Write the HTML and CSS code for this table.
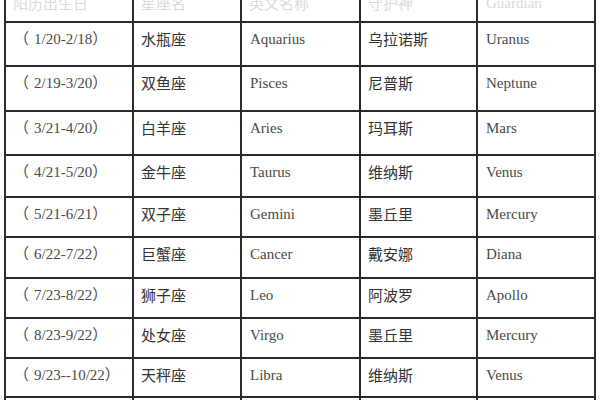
FILE: index.html
```html
<!DOCTYPE html>
<html lang="zh-CN">
<head>
<meta charset="utf-8">
<title>星座表</title>
<link rel="stylesheet" href="styles.css">
</head>
<body>
<div class="page">
  <div class="zodiac">
    <div class="cell head cjk">阳历出生日</div>
    <div class="cell head cjk">星座名</div>
    <div class="cell head cjk">英文名称</div>
    <div class="cell head cjk">守护神</div>
    <div class="cell head">Guardian</div>

    <div class="cell date"><span class="po">（</span>1/20-2/18）</div><div class="cell cjk">水瓶座</div><div class="cell">Aquarius</div><div class="cell cjk">乌拉诺斯</div><div class="cell">Uranus</div>
    <div class="cell date"><span class="po">（</span>2/19-3/20）</div><div class="cell cjk">双鱼座</div><div class="cell">Pisces</div><div class="cell cjk">尼普斯</div><div class="cell">Neptune</div>
    <div class="cell date"><span class="po">（</span>3/21-4/20）</div><div class="cell cjk">白羊座</div><div class="cell">Aries</div><div class="cell cjk">玛耳斯</div><div class="cell">Mars</div>
    <div class="cell date"><span class="po">（</span>4/21-5/20）</div><div class="cell cjk">金牛座</div><div class="cell">Taurus</div><div class="cell cjk">维纳斯</div><div class="cell">Venus</div>
    <div class="cell date"><span class="po">（</span>5/21-6/21）</div><div class="cell cjk">双子座</div><div class="cell">Gemini</div><div class="cell cjk">墨丘里</div><div class="cell">Mercury</div>
    <div class="cell date"><span class="po">（</span>6/22-7/22）</div><div class="cell cjk">巨蟹座</div><div class="cell">Cancer</div><div class="cell cjk">戴安娜</div><div class="cell">Diana</div>
    <div class="cell date"><span class="po">（</span>7/23-8/22）</div><div class="cell cjk">狮子座</div><div class="cell">Leo</div><div class="cell cjk">阿波罗</div><div class="cell">Apollo</div>
    <div class="cell date"><span class="po">（</span>8/23-9/22）</div><div class="cell cjk">处女座</div><div class="cell">Virgo</div><div class="cell cjk">墨丘里</div><div class="cell">Mercury</div>
    <div class="cell date"><span class="po">（</span>9/23--10/22）</div><div class="cell cjk">天秤座</div><div class="cell">Libra</div><div class="cell cjk">维纳斯</div><div class="cell">Venus</div>
    <div class="cell date"><span class="po">（</span>10/23-11/21）</div><div class="cell cjk">天蝎座</div><div class="cell">Scorpio</div><div class="cell cjk">普鲁托</div><div class="cell">Pluto</div>
  </div>
</div>
</body>
</html>
```

FILE: styles.css
```css
html, body {
  margin: 0;
  padding: 0;
  background: #ffffff;
  overflow: hidden;
}

.page {
  width: 600px;
  height: 400px;
  overflow: hidden;
  padding-left: 4px;
  box-sizing: border-box;
}

.zodiac {
  display: grid;
  grid-template-columns: 128px 108px 119px 117px 118px;
  grid-template-rows: 30px 44px 45px 44px 42px 40px 41px 40px 40px 39px 40px;
  width: max-content;
  margin-top: -9px;
  border-top: 2px solid #2b2b2b;
  border-left: 2px solid #2b2b2b;
  font-family: "Liberation Serif", "Noto Sans CJK SC", serif;
  font-size: 15px;
  line-height: 20px;
  color: #4a4a4a;
}

.cell {
  box-sizing: border-box;
  border-right: 2px solid #2b2b2b;
  border-bottom: 2px solid #2b2b2b;
  padding: 6px 0 0 8px;
  white-space: nowrap;
  overflow: hidden;
}

.cjk {
  font-family: "Noto Sans CJK SC", sans-serif;
  color: #333333;
  padding-left: 7px;
}

.date {
  color: #4a4a4a;
  padding-left: 8px;
}

.po {
  margin-right: 5px;
}

.head {
  color: #dadada;
  padding-top: 0;
}
```
